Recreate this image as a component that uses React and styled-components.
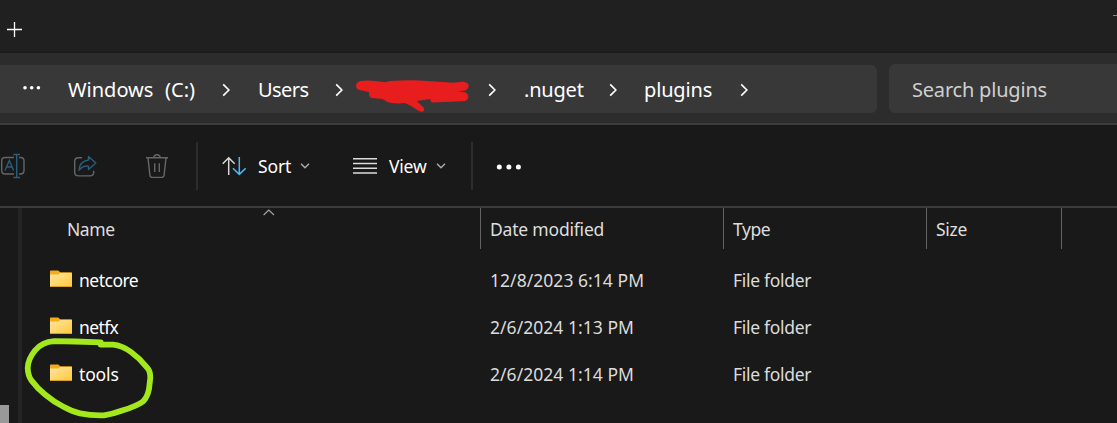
import React from "react";
import styled, { createGlobalStyle } from "styled-components";

const GlobalStyle = createGlobalStyle`
  * { box-sizing: border-box; }
  body {
    margin: 0;
    background: #191919;
    font-family: "Segoe UI", "Noto Sans", "Open Sans", sans-serif;
    overflow: hidden;
  }
  svg { display: block; flex: none; }
`;

const Window = styled.div`
  position: relative;
  display: flex;
  flex-direction: column;
  width: 1117px;
  height: 423px;
  overflow: hidden;
  background: #191919;
  color: #fff;
`;

const TabStrip = styled.div`
  display: flex;
  justify-content: space-between;
  height: 53px;
  flex: none;
  padding: 22px 0 0 7px;
  background: linear-gradient(#202020 50px, #1b1b1b 53px);
`;

const MinimizeEdge = styled.span`
  width: 4px;
  height: 1px;
  margin-top: -7px;
  background: #8a8a8a;
`;

const AddressBar = styled.div`
  display: flex;
  height: 72px;
  flex: none;
  gap: 12px;
  padding-top: 12px;
  background: #2c2c2c;
  border-bottom: 2px solid #3c3c3c;
`;

const Breadcrumbs = styled.div`
  display: flex;
  align-items: center;
  width: 877px;
  height: 48px;
  padding: 2px 0 0 22px;
  border-radius: 0 6px 6px 0;
  background: #383838;
`;

const Scribble = styled.span`
  flex: none;
  padding-top: 12px;
`;

const SearchBox = styled.div`
  display: flex;
  align-items: center;
  flex: 1;
  height: 49px;
  margin-top: -1px;
  padding: 3px 0 0 23px;
  border-radius: 6px 0 0 6px;
  background: #383838;
  color: #cfcfcf;
`;

const Text = styled.span`
  flex: none;
  width: ${(p) => (p.$width ? `${p.$width}px` : "auto")};
  font-size: ${(p) => p.$size || 17.5}px;
  line-height: 26px;
  letter-spacing: ${(p) => p.$track || 0}px;
  word-spacing: ${(p) => p.$words || 0}px;
  white-space: pre;
`;

const CrumbChevron = styled.span`
  flex: none;
  margin: 0 ${(p) => p.$after}px 0 ${(p) => p.$before}px;
`;

const Toolbar = styled.div`
  display: flex;
  align-items: center;
  height: 83px;
  flex: none;
  padding-top: 1px;
  border-bottom: 2px solid #3c3c3c;
`;

const IconButton = styled.span`
  display: flex;
  flex: none;
  width: ${(p) => p.$width || 72}px;
`;

const MenuButton = styled.span`
  display: flex;
  align-items: center;
  flex: none;
  gap: ${(p) => p.$gap}px;
  margin-left: ${(p) => p.$before}px;
`;

const MenuLabel = styled.span`
  display: flex;
  align-items: center;
`;

const Separator = styled.span`
  flex: none;
  width: 2px;
  height: 48px;
  margin-left: ${(p) => p.$before || 0}px;
  margin-right: ${(p) => p.$after || 0}px;
  background: #2d2d2d;
`;

const Body = styled.div`
  display: flex;
  flex: 1;
`;

const SidePane = styled.div`
  display: flex;
  align-items: flex-end;
  flex: none;
  width: 22px;
  border-right: 4px solid #242424;
`;

const ScrollThumb = styled.span`
  width: 9px;
  height: 18px;
  background: #999;
`;

const List = styled.div`
  flex: 1;
`;

const columns = "459px 243px 203px 135px";

const HeaderRow = styled.div`
  display: grid;
  grid-template-columns: ${columns};
  height: 41px;
  margin-bottom: 7px;
`;

const HeaderCell = styled.div`
  position: relative;
  display: flex;
  align-items: center;
  padding: 1px 0 0 ${(p) => p.$pad || 9}px;
  border-right: 1px solid #636363;
  color: #dedede;
`;

const SortMark = styled.span`
  position: absolute;
  top: 1px;
  left: 241px;
`;

const FileRow = styled.div`
  display: grid;
  grid-template-columns: ${columns};
  align-items: center;
  height: 47px;
  color: #dcdcdc;
`;

const Cell = styled.div`
  display: flex;
  padding-left: 9px;
`;

const NameCell = styled.div`
  display: flex;
  align-items: center;
  gap: 7px;
  padding-left: 28px;
  color: #fff;
`;

const FolderSlot = styled.span`
  margin-top: -2px;
`;

const Marker = styled.svg`
  position: absolute;
  left: 0;
  top: 0;
  pointer-events: none;
`;

const Chevron = ({ before = 27, after = 27 }) => (
  <CrumbChevron $before={before} $after={after}>
    <svg width="8" height="14" viewBox="0 0 8 14" fill="none" stroke="#fff" strokeWidth="1.7">
      <path d="M1.2 1.3 6.900 7 1.200 12.700" />
    </svg>
  </CrumbChevron>
);

const DownChevron = () => (
  <svg width="10" height="6" viewBox="0 0 10 6" fill="none" stroke="#adadad" strokeWidth="1.4">
    <path d="m1 .8 4 4 4-4" />
  </svg>
);

const Folder = ({ id }) => (
  <svg width="22" height="18" viewBox="0 0 22 18">
    <defs>
      <linearGradient id={id} x1="0" y1="0" x2="1" y2="1">
        <stop offset="0" stopColor="#ffe6a0" />
        <stop offset="1" stopColor="#ffc83a" />
      </linearGradient>
    </defs>
    <path d="M0 1.300Q0 .5.8.5h7.400l2 1.800h11q.8 0 .8.8V7H0Z" fill="#f5ab18" />
    <path d="M0 4.500h8.200l2-1.500H22v13.300q0 .7-.7.7H.7Q0 17 0 16.300Z" fill={`url(#${id})`} />
    <path d="M.3 16.500h21.400" stroke="#d29a26" strokeWidth=".9" />
  </svg>
);

const files = [
  { name: "netcore", nameTrack: -0.5, date: "12/8/2023 6:14 PM" },
  { name: "netfx", nameTrack: -0.6, date: "2/6/2024 1:13 PM" },
  { name: "tools", nameTrack: -0.15, date: "2/6/2024 1:14 PM" },
];

export default function App() {
  return (
    <>
      <GlobalStyle />
      <Window>
        <TabStrip>
          <svg width="15" height="15" viewBox="0 0 15 15" stroke="#fff" strokeWidth="1.3">
            <path d="M0 7.500h15M7.500 0v15" />
          </svg>
          <MinimizeEdge />
        </TabStrip>

        <AddressBar>
          <Breadcrumbs>
            <svg width="46" height="10" viewBox="0 0 46 10" fill="#fff">
              <circle cx="3" cy="2.700" r="1.800" />
              <circle cx="9.700" cy="2.700" r="1.800" />
              <circle cx="16.400" cy="2.700" r="1.800" />
            </svg>
            <Text $width={127} $size={20} $words={0.6}>Windows  (C:)</Text>
            <Chevron after={28} />
            <Text $width={50} $size={20} $track={-0.55}>Users</Text>
            <Chevron after={13} />
            <Scribble>
              <svg width="114" height="34" viewBox="0 0 114 34">
                <path
                  fill="#e81e1e"
                  d="M0 7Q0 4 4 2 11 .8 19 2l10 1.300L34 2Q49 1 64 1.400L97 3.700l10-1q6 .5 5.700 4.500-.7 3.300-3.700 4.300l-7 .8 7 1q3.500 1.500 3.300 5-.5 3-3.300 3.700L89 23l-13.300.5-1.700-3.500L60.700 22l6 5.700Q69 29.500 68 31.500 66 34 61.700 31.300 54 26 49 24q-7 .8-13.300 0Q30 23 26.700 20l-11-1q-3.500-2-2.400-6L2.300 10.700Q0 9.500 0 7Z"
                />
              </svg>
            </Scribble>
            <Chevron before={18} after={28} />
            <Text $width={58} $size={20} $track={-0.2}>.nuget</Text>
            <Chevron after={27} />
            <Text $width={69} $size={20} $track={-0.15}>plugins</Text>
            <Chevron />
          </Breadcrumbs>
          <SearchBox>
            <Text $size={20} $track={-0.2}>Search plugins</Text>
          </SearchBox>
        </AddressBar>

        <Toolbar>
          <IconButton>
            <svg width="26" height="26" viewBox="0 0 26 26" fill="none" stroke="#666" strokeWidth="1.400">
              <path d="M14 4.500H5Q1.700 4.500 1.700 8v9.500Q1.700 21 5 21h9M19 4.500h1.500Q24 4.500 24 8v9.500Q24 21 20.500 21H19" />
              <path d="m5 17.500 4.300-10 4.300 10M6.500 14h5.600M16.700 1.500v23M13.300 1.500H20M13.300 24.500H20" stroke="#2b5d7c" />
            </svg>
          </IconButton>
          <IconButton>
            <svg width="26" height="26" viewBox="0 0 26 26" fill="none" stroke="#666" strokeWidth="1.400">
              <path d="M10 4.800H6.500Q2.700 4.800 2.700 8.500v10.700Q2.700 22.900 6.500 22.900H18q3.700 0 3.700-3.700V17.700" />
              <path
                d="M16.500 3.400 23.800 10l-7.300 6.600v-3.500Q10.500 12.600 7 17.300 7.500 8.300 16.500 7Z"
                stroke="#2b5d7c"
                strokeLinejoin="round"
              />
            </svg>
          </IconButton>
          <IconButton $width={52}>
            <svg width="26" height="26" viewBox="0 0 26 26" fill="none" stroke="#666" strokeWidth="1.400">
              <path d="M2 4.800h22M9.700 4.800Q10 1.700 13 1.700t3.300 3.100M4 4.800l1.900 17.400q.3 2.200 2.400 2.200h9.400q2.100 0 2.400-2.200L22 4.800M10.700 10.300V19M15.300 10.300V19" />
            </svg>
          </IconButton>
          <Separator />
          <MenuButton $before={24} $gap={12}>
            <svg width="24" height="20" viewBox="0 0 24 20" fill="none" strokeWidth="1.500">
              <path d="M6.700 19V1.800M.7 7.700l6-6 6 6" stroke="#d8d8d8" />
              <path d="M17.300 1v17.200M10.900 12.200l6.400 6.200 6.400-6.200" stroke="#4cb8f0" />
            </svg>
            <MenuLabel>
              <Text $width={42} $track={-0.1}>Sort</Text>
              <DownChevron />
            </MenuLabel>
          </MenuButton>
          <MenuButton $before={43} $gap={12}>
            <svg width="24" height="18" viewBox="0 0 24 18" stroke="#dcdcdc" strokeWidth="1.500">
              <path d="M0 1.800h24M0 6.500h24M0 11.200h24M0 15.900h24" />
            </svg>
            <MenuLabel>
              <Text $width={47} $track={-0.2}>View</Text>
              <DownChevron />
            </MenuLabel>
          </MenuButton>
          <Separator $before={25} $after={23} />
          <svg width="26" height="8" viewBox="0 0 26 8" fill="#fff">
            <circle cx="3.300" cy="5" r="2.500" />
            <circle cx="12.900" cy="5" r="2.500" />
            <circle cx="22.400" cy="5" r="2.500" />
          </svg>
        </Toolbar>

        <Body>
          <SidePane>
            <ScrollThumb />
          </SidePane>
          <List>
            <HeaderRow>
              <HeaderCell $pad={45}>
                <SortMark>
                  <svg width="12" height="7" viewBox="0 0 12 7" fill="none" stroke="#a8a8a8" strokeWidth="1.100">
                    <path d="m.6 6 5.200-5L11 6" />
                  </svg>
                </SortMark>
                <Text $track={-0.45}>Name</Text>
              </HeaderCell>
              <HeaderCell>
                <Text $track={-0.2}>Date modified</Text>
              </HeaderCell>
              <HeaderCell>
                <Text $track={-0.4}>Type</Text>
              </HeaderCell>
              <HeaderCell>
                <Text $track={-0.25}>Size</Text>
              </HeaderCell>
            </HeaderRow>
            {files.map((file) => (
              <FileRow key={file.name}>
                <NameCell>
                  <FolderSlot>
                    <Folder id={`folder-${file.name}`} />
                  </FolderSlot>
                  <Text $track={file.nameTrack}>{file.name}</Text>
                </NameCell>
                <Cell>
                  <Text $track={0.04}>{file.date}</Text>
                </Cell>
                <Cell>
                  <Text $track={-0.3}>File folder</Text>
                </Cell>
              </FileRow>
            ))}
          </List>
        </Body>

        <Marker width="160" height="423" viewBox="0 0 160 423" fill="none">
          <path
            d="M100.700 342.300 75 341.500 54 341.200Q42 342 35 350.500 28 359 27.700 368 28 376 31.500 380.500 37 388 45 394.500 54 402 63 406.500 72 411.500 80 413.300 92 415.800 104 415.300 113 414 123 410.300 137 406 143 401.500 147.500 397 149 389L150.300 378Q150.500 371 147 367.500 140 358.500 131 352 122 345.500 113 344.700L100.700 344.500"
            stroke="#a3e81c"
            strokeWidth="5.800"
            strokeLinecap="round"
            strokeLinejoin="round"
          />
        </Marker>
      </Window>
    </>
  );
}
